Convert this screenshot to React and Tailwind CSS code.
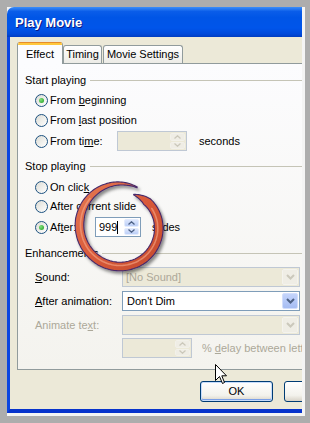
import React from 'react';

const ringPaths = () => {
  const cx = 120, cy = 225, N = 160;
  const outer = [], inner = [], mid = [];
  for (let i = 0; i <= N; i++) {
    const t = i / N;
    const a = ((-65 - 360 * t) * Math.PI) / 180;
    const s = t < 0.65 ? 0 : ((t - 0.65) / 0.35) ** 2 * 8;
    const rx = 40.5 - s, ry = 41.5 - s;
    const w = 8 * Math.min(1, (t / 0.3) ** 0.8, (1 - t) / 0.07) + 0.6;
    outer.push([cx + (rx + w / 2) * Math.cos(a), cy + (ry + w / 2) * Math.sin(a)]);
    inner.push([cx + (rx - w / 2) * Math.cos(a), cy + (ry - w / 2) * Math.sin(a)]);
    if (t > 0.2 && t < 0.9) mid.push([cx + (rx - 1) * Math.cos(a), cy + (ry - 1) * Math.sin(a)]);
  }
  const fmt = (pts) => pts.map((p) => p[0].toFixed(1) + ' ' + p[1].toFixed(1)).join(' L');
  return {
    body: 'M' + fmt([...outer, ...inner.reverse()]) + ' Z',
    mid: 'M' + fmt(mid),
  };
};

const Ring = () => {
  const { body, mid } = ringPaths();
  return (
    <svg className="pointer-events-none absolute left-0 top-0" width="310" height="423" viewBox="0 0 310 423">
      <defs>
        <filter id="sh" x="-20%" y="-20%" width="140%" height="140%">
          <feDropShadow dx="2" dy="2.5" stdDeviation="1.4" floodColor="#000" floodOpacity="0.45" />
        </filter>
        <linearGradient id="rg" x1="0" y1="0" x2="1" y2="1">
          <stop offset="0" stopColor="#e57a55" />
          <stop offset="0.5" stopColor="#d95a3a" />
          <stop offset="1" stopColor="#c44a2c" />
        </linearGradient>
      </defs>
      <path d={body} fill="url(#rg)" stroke="#46296a" strokeWidth="1.1" filter="url(#sh)" />
      <path d={mid} fill="none" stroke="#f4a584" strokeWidth="1.6" strokeLinecap="round" opacity="0.65" />
    </svg>
  );
};

const Cursor = () => (
  <svg className="pointer-events-none absolute left-[215px] top-[364px]" width="13" height="21" viewBox="0 0 13 21">
    <path d="M0.5 0.5 V16.5 L4.5 12.5 L7.5 19.5 L9.5 18.5 L6.8 11.8 H11.5 Z" fill="#fff" stroke="#000" strokeWidth="1" strokeLinejoin="miter" />
  </svg>
);

const Radio = ({ checked }) => (
  <span className="flex h-[13px] w-[13px] shrink-0 items-center justify-center rounded-full border border-[#1c5180] bg-[linear-gradient(135deg,#dcdcd5,#ffffff)]">
    {checked && <span className="h-[5px] w-[5px] rounded-full bg-[radial-gradient(circle_at_35%_35%,#7fe07a,#1f9c1f)]" />}
  </span>
);

const Chevron = ({ color }) => (
  <svg width="9" height="6" viewBox="0 0 9 6">
    <polyline points="1,1 4.5,4.5 8,1" fill="none" stroke={color} strokeWidth="2" />
  </svg>
);

const Arrow = ({ up, color }) => (
  <svg width="7" height="4" viewBox="0 0 7 4">
    <polyline points={up ? '0.5,3.5 3.5,0.8 6.5,3.5' : '0.5,0.5 3.5,3.2 6.5,0.5'} fill="none" stroke={color} strokeWidth="1.3" />
  </svg>
);

const SpinBtns = ({ disabled }) => {
  const cls = disabled
    ? 'flex flex-1 items-center justify-center rounded-[2px] border border-[#f2f1ea] bg-[#efede5]'
    : 'flex flex-1 items-center justify-center rounded-[2px] border border-[#e3ebfd] bg-[linear-gradient(#dce6fd,#bccff7)]';
  const c = disabled ? '#cbc8bb' : '#4d6185';
  return (
    <div className="flex w-[15px] flex-col gap-px">
      <div className={cls}><Arrow up color={c} /></div>
      <div className={cls}><Arrow color={c} /></div>
    </div>
  );
};

const Spin = ({ disabled, width, children }) => (
  <div
    className={
      disabled
        ? `flex h-[20px] shrink-0 border border-[#bfc8d4] bg-[#ece9d8] p-px ${width}`
        : `flex h-[20px] shrink-0 border border-[#7f9db9] bg-white p-px ${width}`
    }
  >
    <div className="flex flex-1 items-center pl-px">{children}</div>
    <SpinBtns disabled={disabled} />
  </div>
);

const Combo = ({ value, disabled }) => (
  <div
    className={
      disabled
        ? 'flex h-[20px] w-[178px] shrink-0 border border-[#bfc8d4] bg-[#ece9d8] p-px'
        : 'flex h-[20px] w-[178px] shrink-0 border border-[#7f9db9] bg-white p-px'
    }
  >
    <div className={disabled ? 'flex flex-1 items-center pl-[2px] text-[#aca899]' : 'flex flex-1 items-center pl-[3px]'}>
      {value}
    </div>
    <div
      className={
        disabled
          ? 'flex w-[16px] items-center justify-center rounded-[2px] border border-[#f4f3ee] bg-[#efede5]'
          : 'flex w-[16px] items-center justify-center rounded-[2px] border border-[#d2defc] bg-[linear-gradient(#c4d4fb,#a6bdf3)]'
      }
    >
      <Chevron color={disabled ? '#cbc8bb' : '#4d6185'} />
    </div>
  </div>
);

const Group = ({ children }) => (
  <div className="flex h-[16px] items-center">
    <span className="whitespace-nowrap">{children}</span>
    <span className="ml-[4px] h-px flex-1 bg-[#c5c4b6]" />
  </div>
);

const RadioRow = ({ checked, className, children }) => (
  <div className={`flex items-center gap-[2px] whitespace-nowrap pl-[10px] ${className}`}>
    <Radio checked={checked} />
    {children}
  </div>
);

export default function App() {
  return (
    <div className="relative h-[423px] w-[310px] overflow-hidden bg-[#adadad] pl-[7px] pt-[7px] font-['Liberation_Sans',Arial,sans-serif] text-[11px] leading-[13px] text-black">
      <div className="h-[409px] w-[298px] bg-[#f4f4f4] pb-[3px] pr-[3px]">
        <div className="flex h-[406px] w-[295px] flex-col overflow-hidden rounded-tl-[7px]">
          <div className="flex h-[30px] shrink-0 items-center bg-[linear-gradient(#3d8ef8,#0a5de9_15%,#0055e6_35%,#0055ea_70%,#0049da_90%,#003cc0)] pl-[8px] pt-[1px] text-[13px] font-bold text-white [text-shadow:1px_1px_#0a1883]">
            Play Movie
          </div>
          <div className="flex flex-1 flex-col border-b-[4px] border-l-[3px] border-b-[#0733cc] border-l-[#0b45e0] bg-[#ece9d8] pl-[7px] pt-[5px]">
            <div className="flex h-[21px] items-end">
              <div className="relative z-10 -mb-px flex h-[22px] w-[46px] flex-col overflow-hidden rounded-t-[3px] border-x border-[#919b9c] bg-[#fcfcfe]">
                <div className="h-[3px] border-t border-[#e68b2c] bg-[#ffc73c]" />
                <div className="flex flex-1 items-center justify-center">Effect</div>
              </div>
              <div className="flex h-[18px] w-[39px] items-center justify-center rounded-t-[3px] border border-b-0 border-[#919b9c] bg-[linear-gradient(#ffffff,#ecebe6)]">
                Timing
              </div>
              <div className="ml-px flex h-[18px] w-[80px] items-center justify-center rounded-t-[3px] border border-b-0 border-[#919b9c] bg-[linear-gradient(#ffffff,#ecebe6)]">
                Movie Settings
              </div>
            </div>

            <div className="flex h-[307px] w-[292px] shrink-0 flex-col border border-[#919b9c] bg-[linear-gradient(#fcfcfe,#f4f3ee)] pl-[7px] pt-[8px]">
              <Group>Start playing</Group>
              <RadioRow checked className="mt-[3px] h-[19px]">
                <span>From <u>b</u>eginning</span>
              </RadioRow>
              <RadioRow className="h-[20px]">
                <span>From <u>l</u>ast position</span>
              </RadioRow>
              <RadioRow className="mt-px h-[20px]">
                <span className="w-[65px]">From ti<u>m</u>e:</span>
                <Spin disabled width="w-[70px]" />
                <span className="ml-[10px]">seconds</span>
              </RadioRow>

              <div className="mt-[7px]">
                <Group>Stop playing</Group>
              </div>
              <RadioRow className="mt-[3px] h-[20px]">
                <span>On clic<u>k</u></span>
              </RadioRow>
              <RadioRow className="h-[19px]">
                <span>After current slide</span>
              </RadioRow>
              <RadioRow checked className="mt-px h-[20px]">
                <span className="w-[43px]">Af<u>t</u>er:</span>
                <Spin width="w-[46px]">
                  <span className="pl-px">999</span>
                  <span className="h-[13px] w-px bg-black" />
                </Spin>
                <span className="ml-[9px]">slides</span>
              </RadioRow>

              <div className="mt-[8px]">
                <Group>Enhancements</Group>
              </div>
              <div className="mt-[6px] flex h-[20px] items-center pl-[10px]">
                <span className="w-[87px] shrink-0"><u>S</u>ound:</span>
                <Combo value="[No Sound]" disabled />
              </div>
              <div className="mt-[4px] flex h-[20px] items-center pl-[10px]">
                <span className="w-[87px] shrink-0"><u>A</u>fter animation:</span>
                <Combo value="Don't Dim" />
              </div>
              <div className="mt-[4px] flex h-[20px] items-center pl-[10px] text-[#aca899]">
                <span className="w-[87px] shrink-0">Animate te<u>x</u>t:</span>
                <Combo disabled />
              </div>
              <div className="mt-[3px] flex h-[20px] items-center whitespace-nowrap pl-[97px] text-[#aca899]">
                <Spin disabled width="w-[70px]" />
                <span className="ml-[10px]">% <u>d</u>elay between letters</span>
              </div>
            </div>

            <div className="mt-[11px] flex gap-[11px] pl-[183px]">
              <div className="flex h-[21px] w-[73px] shrink-0 items-center justify-center rounded-[3px] border border-[#003c74] bg-[linear-gradient(#ffffff,#f3f2ec_70%,#d8d3c8)] shadow-[inset_0_0_0_1px_#c6dcfb,inset_0_-1px_0_1px_#7c9fe6]">
                OK
              </div>
              <div className="h-[21px] w-[73px] shrink-0 rounded-[3px] border border-[#003c74] bg-[linear-gradient(#ffffff,#f3f2ec_70%,#d8d3c8)]" />
            </div>
          </div>
        </div>
      </div>
      <Ring />
      <Cursor />
    </div>
  );
}
